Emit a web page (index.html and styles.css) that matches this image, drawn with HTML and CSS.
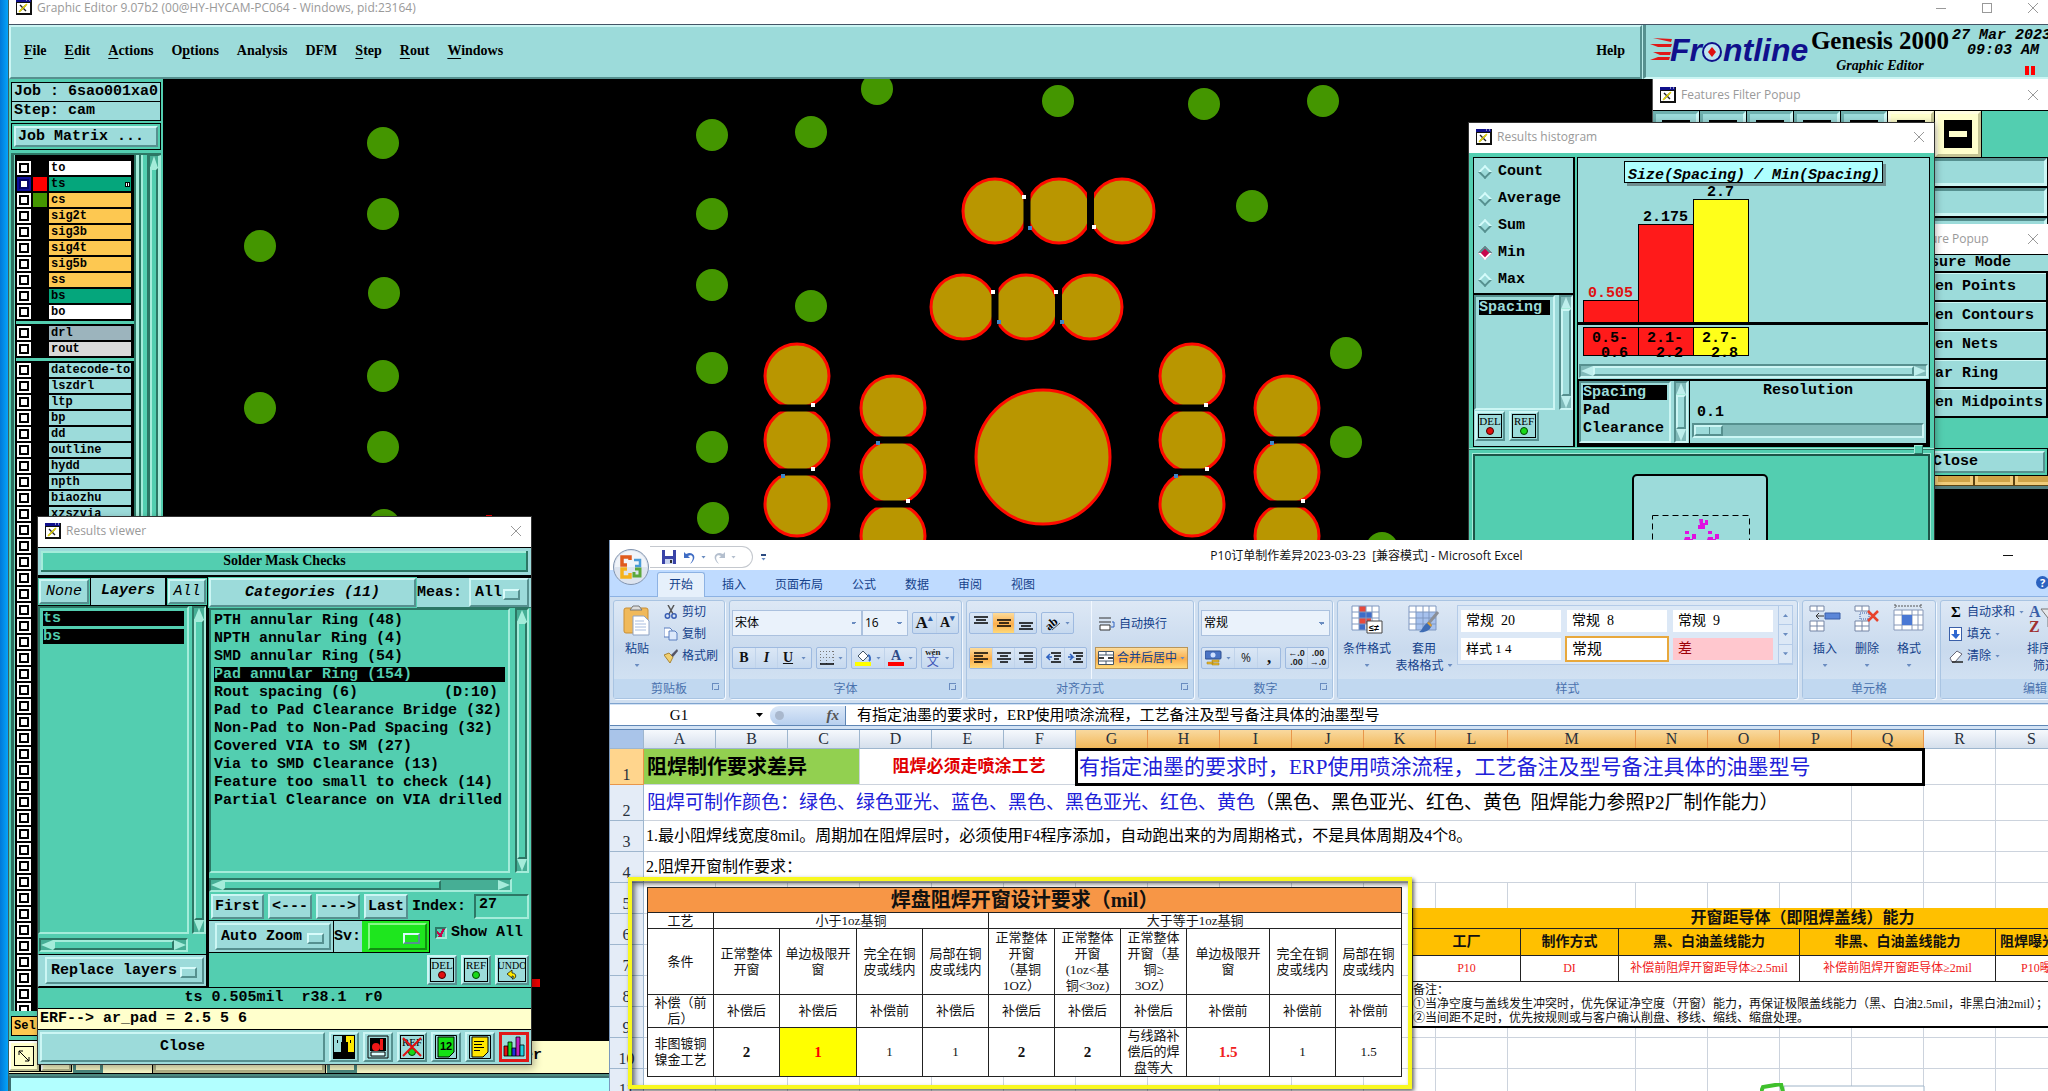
FILE: index.html
```html
<!DOCTYPE html>
<html lang="zh-CN">
<head>
<meta charset="utf-8">
<title>Graphic Editor</title>
<link rel="stylesheet" href="styles.css">
</head>
<body>
<svg class="defs" width="0" height="0" aria-hidden="true">
  <symbol id="appicon" viewBox="0 0 16 16"><rect x="0" y="0" width="16" height="16" fill="#111"/><rect x="1" y="4" width="13" height="10" fill="#fff"/><rect x="0" y="0" width="15" height="3" fill="#10108c"/><path d="M10 1h1M13 1h1" stroke="#fff"/><path d="M4 12l6-6M4 6l6 6" stroke="#222" stroke-width="1.4"/><path d="M3 13l8-8" stroke="#e8d800" stroke-width="1.4"/></symbol>
  <symbol id="close" viewBox="0 0 12 12"><path d="M1 1l10 10M11 1L1 11" stroke="currentColor" fill="none"/></symbol>
  <symbol id="del" viewBox="0 0 24 24"><rect x=".5" y=".5" width="23" height="23" fill="none" stroke="#000"/><text x="12" y="11" text-anchor="middle" font-family="Liberation Serif" font-weight="normal" font-size="11">DEL</text><circle cx="12" cy="17" r="3.5" fill="#e01010" stroke="#400"/></symbol>
  <symbol id="ref" viewBox="0 0 24 24"><rect x=".5" y=".5" width="23" height="23" fill="none" stroke="#000"/><text x="12" y="11" text-anchor="middle" font-family="Liberation Serif" font-weight="normal" font-size="11">REF</text><circle cx="12" cy="17" r="3.5" fill="#18d818" stroke="#040"/></symbol>
</svg>

<main class="desktop">
<!-- Graphic editor -->
<section class="win editor">
  <header class="titlebar"><svg width="16" height="16"><use href="#appicon"/></svg><span>Graphic Editor 9.07b2 (00@HY-HYCAM-PC064 - Windows, pid:23164)</span>
    <div class="caps"><button aria-label="Minimize"><svg width="12" height="12"><path d="M1 6.5h10" stroke="currentColor"/></svg></button><button aria-label="Maximize"><svg width="12" height="12"><rect x="1.500" y="1.500" width="9" height="9" fill="none" stroke="currentColor"/></svg></button><button aria-label="Close"><svg width="12" height="12"><use href="#close"/></svg></button></div>
  </header>
  <div class="menurow">
    <nav class="menubar">
      <button><u>F</u>ile</button><button><u>E</u>dit</button><button><u>A</u>ctions</button><button>O<u>p</u>tions</button><button>Analysis</button><button>DFM</button><button><u>S</u>tep</button><button><u>R</u>out</button><button><u>W</u>indows</button><button class="help">Help</button>
    </nav>
    <div class="brand">
      <svg width="162" height="32" viewBox="0 0 162 32" aria-label="Frontline"><path d="M3 4l19 1-1 3zM0 10h22l-1 3H8zM3 18h18l-1 3H10zM0 26h19l1-3H8z" fill="#e01818"/><text x="20" y="27" class="logo">Fr</text><text x="73" y="27" class="logo">ntline</text><circle cx="62" cy="18" r="9" fill="#bfe6f0" stroke="#10108c" stroke-width="2"/><path d="M62 13l4 5-4 5-4-5z" fill="#e01010"/></svg>
      <div class="product"><strong>Genesis 2000</strong><em>Graphic Editor</em></div>
      <div class="clock"><span>27 Mar 2023</span><span>09:03 AM</span><i class="pause"></i></div>
    </div>
  </div>
  <div class="work">
    <aside class="side">
      <p class="jobline">Job : 6sao001xa0</p>
      <p class="jobline step">Step: cam</p>
      <div class="jm"><button class="btn">Job Matrix ...</button></div>
      <div class="layerbox">
        <ul class="layers">
          <li><input type="checkbox" aria-label="to"><i></i><b class="w">to</b></li>
          <li><input type="checkbox" class="on" aria-label="ts"><i class="red"></i><b class="g">ts<small></small></b></li>
          <li><input type="checkbox" aria-label="cs"><i class="grn"></i><b class="o">cs</b></li>
          <li><input type="checkbox" aria-label="sig2t"><i></i><b class="o">sig2t</b></li>
          <li><input type="checkbox" aria-label="sig3b"><i></i><b class="o">sig3b</b></li>
          <li><input type="checkbox" aria-label="sig4t"><i></i><b class="o">sig4t</b></li>
          <li><input type="checkbox" aria-label="sig5b"><i></i><b class="o">sig5b</b></li>
          <li><input type="checkbox" aria-label="ss"><i></i><b class="o">ss</b></li>
          <li><input type="checkbox" aria-label="bs"><i></i><b class="g">bs</b></li>
          <li><input type="checkbox" aria-label="bo"><i></i><b class="w">bo</b></li>
          <li class="gap"><input type="checkbox" aria-label="drl"><i></i><b class="s">drl</b></li>
          <li><input type="checkbox" aria-label="rout"><i></i><b class="l">rout</b></li>
          <li class="gap"><input type="checkbox" aria-label="datecode-to"><i></i><b>datecode-to</b></li>
          <li><input type="checkbox" aria-label="lszdrl"><i></i><b>lszdrl</b></li>
          <li><input type="checkbox" aria-label="ltp"><i></i><b>ltp</b></li>
          <li><input type="checkbox" aria-label="bp"><i></i><b>bp</b></li>
          <li><input type="checkbox" aria-label="dd"><i></i><b>dd</b></li>
          <li><input type="checkbox" aria-label="outline"><i></i><b>outline</b></li>
          <li><input type="checkbox" aria-label="hydd"><i></i><b>hydd</b></li>
          <li><input type="checkbox" aria-label="npth"><i></i><b>npth</b></li>
          <li><input type="checkbox" aria-label="biaozhu"><i></i><b>biaozhu</b></li>
          <li><input type="checkbox" aria-label="xzszvia"><i></i><b>xzszvia</b></li>
          <li><input type="checkbox" aria-label="layer 23"></li><li><input type="checkbox" aria-label="layer 24"></li><li><input type="checkbox" aria-label="layer 25"></li><li><input type="checkbox" aria-label="layer 26"></li>
          <li><input type="checkbox" aria-label="layer 27"></li><li><input type="checkbox" aria-label="layer 28"></li><li><input type="checkbox" aria-label="layer 29"></li><li><input type="checkbox" aria-label="layer 30"></li>
          <li><input type="checkbox" aria-label="layer 31"></li><li><input type="checkbox" aria-label="layer 32"></li><li><input type="checkbox" aria-label="layer 33"></li><li><input type="checkbox" aria-label="layer 34"></li>
          <li><input type="checkbox" aria-label="layer 35"></li><li><input type="checkbox" aria-label="layer 36"></li><li><input type="checkbox" aria-label="layer 37"></li><li><input type="checkbox" aria-label="layer 38"></li>
          <li><input type="checkbox" aria-label="layer 39"></li><li><input type="checkbox" aria-label="layer 40"></li><li><input type="checkbox" aria-label="layer 41"></li><li><input type="checkbox" aria-label="layer 42"></li>
          <li><input type="checkbox" aria-label="layer 43"></li><li><input type="checkbox" aria-label="layer 44"></li><li><input type="checkbox" aria-label="layer 45"></li><li><input type="checkbox" aria-label="layer 46"></li>
          <li><input type="checkbox" aria-label="layer 47"></li><li><input type="checkbox" aria-label="layer 48"></li><li><input type="checkbox" aria-label="layer 49"></li><li><input type="checkbox" aria-label="layer 50"></li>
          <li><input type="checkbox" aria-label="layer 51"></li><li><input type="checkbox" aria-label="layer 52"></li><li><input type="checkbox" aria-label="layer 53"></li><li><input type="checkbox" aria-label="layer 54"></li>
        </ul>
        <div class="sb v"><i class="up"></i><i class="thumb"></i></div>
      </div>
      <div class="selrow"><button>Sel</button></div>
    </aside>
    <svg class="canvas" width="100%" height="100%" role="img" aria-label="PCB layer view"><g transform="translate(-163 -79)">
      <g fill="#449600"><circle cx="383" cy="143" r="16"/><circle cx="383" cy="214" r="16"/><circle cx="260" cy="246" r="16"/><circle cx="384" cy="293" r="16"/><circle cx="383" cy="376" r="16"/><circle cx="260" cy="408" r="16"/><circle cx="383" cy="447" r="16"/><circle cx="384" cy="525" r="16"/>
      <circle cx="712" cy="135" r="16"/><circle cx="811" cy="132" r="16"/><circle cx="877" cy="89" r="16"/><circle cx="1058" cy="101" r="16"/><circle cx="1204" cy="104" r="16"/><circle cx="1323" cy="101" r="16"/><circle cx="1252" cy="206" r="16"/><circle cx="712" cy="214" r="16"/><circle cx="811" cy="306" r="16"/><circle cx="712" cy="285" r="16"/><circle cx="712" cy="368" r="16"/><circle cx="712" cy="447" r="16"/><circle cx="713" cy="518" r="16"/><circle cx="1346" cy="353" r="16"/><circle cx="1346" cy="442" r="16"/><circle cx="1382" cy="548" r="16"/></g>
      <g fill="#b99600" stroke="#ff0a00" stroke-width="3"><circle cx="995" cy="211" r="32"/><circle cx="1059" cy="211" r="32"/><circle cx="1122" cy="211" r="32"/><circle cx="963" cy="307" r="32"/><circle cx="1026" cy="307" r="32"/><circle cx="1090" cy="307" r="32"/>
      <circle cx="797" cy="376" r="32"/><circle cx="797" cy="440" r="32"/><circle cx="797" cy="504" r="32"/><circle cx="893" cy="408" r="32"/><circle cx="893" cy="472" r="32"/><circle cx="893" cy="536" r="32"/><circle cx="1192" cy="376" r="32"/><circle cx="1192" cy="440" r="32"/><circle cx="1192" cy="504" r="32"/><circle cx="1287" cy="408" r="32"/><circle cx="1287" cy="472" r="32"/><circle cx="1287" cy="536" r="32"/><circle cx="1043" cy="457" r="67"/></g>
      <path d="M1027 190v42M1090.500 190v42M995 286v42M1058.500 286v42M776 408h42M776 472h42M872 440h42M872 504h42M1170 408h42M1170 472h42M1266 440h42M1266 504h42" stroke="#000" stroke-width="7"/>
      <path d="M1022 195h4v4h-4zM1092 225h4v4h-4zM991 290h4v4h-4zM1054 290h4v4h-4zM811 403h4v4h-4zM811 467h4v4h-4zM906 499h4v4h-4zM1204 403h4v4h-4zM1205 467h4v4h-4zM1301 499h4v4h-4z" fill="#fff"/>
      <path d="M1028 226h4v4h-4zM997 320h4v4h-4zM1060 320h4v4h-4zM781 474h4v4h-4zM876 441h4v4h-4zM1174 474h4v4h-4zM1270 441h4v4h-4z" fill="#3f86c8"/>
      <path d="M532 979h8v8h-8zM486 515h6v3h-6z" fill="#f00000"/>
    </g></svg>
  </div>
  <div class="toolstrip"><button aria-label="Zoom"><svg width="20" height="20"><rect x=".5" y=".5" width="19" height="19" fill="none" stroke="#000"/><path d="M5 5l10 10M5 9V5h4M15 11v4h-4" fill="none" stroke="#000"/></svg></button><button aria-label="Tool"></button><i class="tealbit"></i><i class="slot"></i><i class="tealbit"></i><span class="er">Filter</span></div>
  <div class="cmdline"></div>
</section>

<div class="goldstrip"><i></i><i></i><i></i></div>

<!-- Features filter -->
<section class="win feat">
  <header class="titlebar"><svg width="16" height="16"><use href="#appicon"/></svg><span>Features Filter Popup</span><button class="x" aria-label="Close"><svg width="12" height="12"><use href="#close"/></svg></button></header>
  <div class="featbtns"><button aria-label="Line"><i></i></button><button aria-label="Pad"><i></i></button><button aria-label="Surface"><i></i></button><button aria-label="Arc"><i></i></button><button aria-label="Text"><i></i></button><button class="cream" aria-label="Positive"><i></i></button><button class="cream" aria-label="Negative"><i></i></button></div>
  <div class="featrow"></div><div class="featrow"></div><div class="featrow"></div>
</section>

<!-- Measure -->
<section class="win meas">
  <header class="titlebar"><span>Measure Popup</span><button class="x" aria-label="Close"><svg width="12" height="12"><use href="#close"/></svg></button></header>
  <h3>Measure Mode</h3>
  <button>Between Points</button><button>Between Contours</button><button>Between Nets</button><button>Annular Ring</button><button>Between Midpoints</button>
  <div class="measfoot"><button class="btn">Close</button></div>
</section>

<!-- Histogram -->
<section class="win hist">
  <header class="titlebar"><svg width="16" height="16"><use href="#appicon"/></svg><span>Results histogram</span><button class="x" aria-label="Close"><svg width="12" height="12"><use href="#close"/></svg></button></header>
  <div class="histtop">
    <div class="hleft">
      <div class="radios"><label><input type="radio" name="m">Count</label><label><input type="radio" name="m">Average</label><label><input type="radio" name="m">Sum</label><label><input type="radio" name="m" checked>Min</label><label><input type="radio" name="m">Max</label></div>
      <div class="hlistrow"><ul class="mlist"><li class="sel">Spacing</li></ul><div class="sb v"><i class="up"></i><i class="thumb"></i><i class="down"></i></div></div>
      <div class="icons"><button class="btn ic" aria-label="DEL"><svg width="24" height="24"><use href="#del"/></svg></button><button class="btn ic" aria-label="REF"><svg width="24" height="24"><use href="#ref"/></svg></button></div>
    </div>
    <div class="hright">
      <svg class="plot" width="350" height="205" role="img" aria-label="Size by minimum spacing"><g transform="translate(-1578 -158)">
        <rect x="1627" y="164" width="259" height="22" fill="#6f8f90"/><rect x="1624.500" y="161.500" width="258" height="21" fill="#aeffff" stroke="#000"/><text x="1628" y="179" class="ttl">Size(Spacing) / Min(Spacing)</text>
        <g stroke="#000"><rect x="1583.500" y="300.500" width="55" height="22" fill="#ff1a1a"/><rect x="1638.500" y="224.500" width="55" height="98" fill="#ff1a1a"/><rect x="1693.500" y="199.500" width="55" height="123" fill="#ffff1a"/><rect x="1583.500" y="327.500" width="55" height="28" fill="#ff1a1a"/><rect x="1638.500" y="327.500" width="55" height="28" fill="#ff1a1a"/><rect x="1693.500" y="327.500" width="55" height="28" fill="#ffff1a"/></g>
        <rect x="1578" y="322" width="350" height="3"/>
        <text x="1588" y="297" fill="#e01010">0.505</text><text x="1643" y="221">2.175</text><text x="1707" y="196">2.7</text>
        <text x="1592" y="342">0.5-</text><text x="1601" y="357">0.6</text><text x="1647" y="342">2.1-</text><text x="1656" y="357">2.2</text><text x="1702" y="342">2.7-</text><text x="1711" y="357">2.8</text>
      </g></svg>
      <div class="sb h"><i class="left"></i><i class="thumb"></i><i class="right"></i></div>
      <div class="hres"><ul class="mlist"><li class="sel">Spacing</li><li>Pad</li><li>Clearance</li></ul><div class="sb v"><i class="up"></i><i class="thumb"></i><i class="down"></i></div>
        <div class="res"><label for="resn">Resolution</label><output for="resn">0.1</output><input id="resn" type="range" min="0" max="100" value="0"></div></div>
    </div>
  </div>
  <div class="sash"><i></i></div>
  <div class="hbottom"><svg width="140" height="90"><rect x="3" y="2" width="134" height="100" rx="4" fill="#9cdbda" stroke="#000" stroke-width="2"/><rect x="22.500" y="42.500" width="97" height="60" fill="none" stroke="#000" stroke-dasharray="6 4"/><path d="M69 46h4v4h2v-3h3v5h-3v4h-7v-4h2zM55 58h4v3h-4zM55 64h5v2h2v-5h4v5h-3v3h-4v-2h-5zM78 58h4v3h-4zM78 64h5v2h2v-5h4v5h-3v3h-4v-2h-5z" fill="#e010e0"/></svg></div>
</section>

<!-- Results viewer -->
<section class="win rv">
  <header class="titlebar"><svg width="16" height="16"><use href="#appicon"/></svg><span>Results viewer</span><button class="x" aria-label="Close"><svg width="12" height="12"><use href="#close"/></svg></button></header>
  <h2>Solder Mask Checks</h2>
  <div class="rvmain">
    <div class="rvl">
      <div class="lh"><button class="btn it">None</button><strong>Layers</strong><button class="btn it">All</button></div>
      <div class="lw"><ul class="mlist"><li class="sel">ts</li><li class="sel">bs</li></ul><div class="sb v"><i class="up"></i><i class="thumb"></i><i class="down"></i></div></div>
      <div class="sb h"><i class="left"></i><i class="thumb"></i><i class="right"></i></div>
      <label class="opt rep"><select aria-label="Layer action"><option>Replace layers</option></select></label>
    </div>
    <div class="rvr">
      <div class="ch"><button class="btn it b">Categories (11)</button><label for="ms">Meas:</label><span class="opt"><select id="ms"><option>All</option></select></span></div>
      <div class="lw"><ul class="mlist"><li>PTH annular Ring (48)</li><li>NPTH annular Ring (4)</li><li>SMD annular Ring (54)</li><li class="sel">Pad annular Ring (154)</li><li><span>Rout spacing (6)</span><span class="d">(D:10)</span></li><li>Pad to Pad Clearance Bridge (32)</li><li>Non-Pad to Non-Pad Spacing (32)</li><li>Covered VIA to SM (27)</li><li>Via to SMD Clearance (13)</li><li>Feature too small to check (14)</li><li>Partial Clearance on VIA drilled</li></ul><div class="sb v"><i class="up"></i><i class="thumb"></i><i class="down"></i></div></div>
      <div class="sb h part"><i class="left"></i><i class="thumb"></i><i class="right"></i></div>
      <div class="nav"><button class="btn">First</button><button class="btn">&lt;---</button><button class="btn">---&gt;</button><button class="btn">Last</button><label for="idx">Index:</label><input id="idx" value="27"></div>
      <div class="zoomrow"><span class="opt az"><select aria-label="Zoom mode"><option>Auto Zoom</option></select></span><label for="sv">Sv:</label><span class="opt sv"><select id="sv"><option> </option></select></span><label class="show"><input type="checkbox" checked>Show All</label></div>
      <div class="icons end"><button class="btn ic" aria-label="DEL"><svg width="24" height="24"><use href="#del"/></svg></button><button class="btn ic" aria-label="REF"><svg width="24" height="24"><use href="#ref"/></svg></button><button class="btn ic" aria-label="UNDO"><svg width="28" height="24"><rect x=".5" y=".5" width="27" height="23" fill="none" stroke="#000"/><text x="14" y="11" text-anchor="middle" font-family="Liberation Serif" font-weight="normal" font-size="10">UNDO</text><path d="M9 16l5-4v3c5 0 5 6 0 6 2-2 2-3 0-3v2z" fill="#ffe800" stroke="#000" stroke-width=".7"/></svg></button></div>
    </div>
  </div>
  <p class="stat">ts 0.505mil&nbsp; r38.1&nbsp; r0</p>
  <p class="erf">ERF--&gt; ar_pad = 2.5 5 6</p>
  <div class="rvfoot"><button class="btn closeb">Close</button>
    <button class="btn ic" aria-label="Contrast"><svg width="22" height="24"><path d="M0 0h22v24H0z"/><path d="M1 1h8v6h-1v10H1z" fill="#9cdbda"/><path d="M13 1h8v16h-6V7h-2z" fill="#ffe800"/><path d="M4 5h1v3H4z"/><path d="M17 5h1v3h-1z"/></svg></button>
    <button class="btn ic" aria-label="Marker"><svg width="22" height="24"><path d="M1 1h20v22H1z" fill="none" stroke="#000"/><path d="M3 3h16v13H3z"/><circle cx="9" cy="12" r="4" fill="#f01818"/><path d="M13 4h3v11h-3z" fill="#f01818"/><path d="M4 17h14v4H4z" fill="#dff" stroke="#000"/></svg></button>
    <button class="btn ic" aria-label="No REF"><svg width="24" height="24"><use href="#ref"/><path d="M3 3l18 18M21 3L3 21" stroke="#e01010" stroke-width="2"/></svg></button>
    <button class="btn ic" aria-label="Numbers"><svg width="22" height="24"><path d="M.5.500h21v23H.5z" fill="none" stroke="#000"/><path d="M3 2h16v15l-5 5H3z" fill="#14e014" stroke="#000"/><text x="11" y="15" text-anchor="middle" font-family="Liberation Sans" font-weight="bold" font-size="11">12</text></svg></button>
    <button class="btn ic" aria-label="Notes"><svg width="22" height="24"><path d="M.5.500h21v23H.5z" fill="none" stroke="#000"/><path d="M3 2h16v15l-5 5H3z" fill="#ffe800" stroke="#000"/><path d="M5 6.500h10M5 9.500h8M5 12.500h10M5 15.500h6" stroke="#000"/></svg></button>
    <button class="btn ic hot" aria-label="Histogram"><svg width="22" height="22"><g stroke="#000" stroke-width=".8"><path d="M1 10h4v10H1z" fill="#e01010"/><path d="M5 6h4v14H5z" fill="#18d818"/><path d="M9 12h4v8H9z" fill="#2030e0"/><path d="M13 1h4v19h-4z" fill="#c020c0"/><path d="M17 9h4v11h-4z" fill="#20d0e0"/></g></svg></button>
  </div>
</section>

<!-- Excel -->
<section class="win xl">
  <header class="xltitle">
    <svg class="orb" width="38" height="38"><circle cx="19" cy="19" r="17.500" fill="#dde4ef" stroke="#8294ae"/><path d="M3 19a16 16 0 0 1 32 0z" fill="#fff" opacity=".6"/><g fill="none" stroke-width="3.500"><path d="M18 12V9h-8v8h5" stroke="#e05a1c"/><path d="M22 12h6v6h-5" stroke="#4a9bd8" stroke-width="2.500"/><path d="M15 21h-5v8h8v-4" stroke="#f5b21c"/><path d="M23 21h5v7h-6v-4" stroke="#5da83c" stroke-width="3"/></g></svg>
    <div class="qat"><button aria-label="Save"><svg width="14" height="14"><path d="M0 0h14v14H0z" fill="#3a44a8"/><path d="M3 0h8v6H3z" fill="#fff"/><path d="M3 9h8v5H3z" fill="#c8d4f0"/><path d="M8 10h2v3H8z" fill="#333"/></svg></button><button aria-label="Undo"><svg width="13" height="13"><path d="M1 1v6h6L5 5c4-2 6 1 4 5l-2 3c6-4 6-11-1-11L3 3z" fill="#3f6cc4"/></svg></button><i class="caret"></i><button aria-label="Redo"><svg width="13" height="13"><path d="M12 1v6H6l2-2C4 3 2 6 4 10l2 3C0 9 0 2 7 2l3 1z" fill="#b4bfce"/></svg></button><i class="caret dim"></i></div>
    <button class="more" aria-label="Customize"><i class="caret"></i></button>
    <h1>P10订单制作差异2023-03-23&nbsp; [兼容模式] - Microsoft Excel</h1>
    <div class="caps dark"><button aria-label="Minimize"><svg width="12" height="12"><path d="M1 6.500h10" stroke="currentColor"/></svg></button><button aria-label="Maximize"><svg width="12" height="12"><rect x="1.500" y="1.500" width="9" height="9" fill="none" stroke="currentColor"/></svg></button><button aria-label="Close"><svg width="12" height="12"><use href="#close"/></svg></button></div>
  </header>
  <nav class="tabs"><button class="on">开始</button><button>插入</button><button>页面布局</button><button>公式</button><button>数据</button><button>审阅</button><button>视图</button><button class="q" aria-label="Help">?</button></nav>
  <div class="ribbon">
    <section class="grp clip"><div class="gb">
      <button class="big"><svg width="28" height="32"><rect x="1" y="4" width="24" height="25" rx="2" fill="#f0b95a" stroke="#c98f34"/><path d="M7 6l3-4h6l3 4z" fill="#ddd" stroke="#777"/><path d="M10 12h11l5 5v14H10z" fill="#fff" stroke="#8fa3c4"/><path d="M12 17h9M12 20h11M12 23h11M12 26h11" stroke="#a8bde0"/></svg><span>粘贴</span><i class="caret"></i></button>
      <div class="stack"><button><svg width="14" height="14"><path d="M4 0l5 9M10 0L5 9" stroke="#555" stroke-width="1.500"/><circle cx="3.500" cy="11" r="2.200" fill="none" stroke="#3a5fb4" stroke-width="1.500"/><circle cx="10" cy="11" r="2.200" fill="none" stroke="#3a5fb4" stroke-width="1.500"/></svg>剪切</button><button><svg width="14" height="14"><path d="M0 1h6l2 2v7H0z" fill="#fff" stroke="#5a7fc0"/><path d="M5 4h6l2 2v7H5z" fill="#dce8fb" stroke="#5a7fc0"/></svg>复制</button><button><svg width="14" height="14"><path d="M0 6l5-2 4 4-3 6z" fill="#f0cf70" stroke="#a88436"/><path d="M7 6l6-6 1 2-5 6z" fill="#556"/></svg>格式刷</button></div>
    </div><footer>剪贴板<i class="dl"></i></footer></section>

    <section class="grp font"><div class="gb col">
      <div class="r"><select class="wf" aria-label="字体"><option>宋体</option></select><select class="ws" aria-label="字号"><option>16</option></select><div class="bx"><button><span class="se f18">A<sup>▴</sup></span></button><button><span class="se">A<sup>▾</sup></span></button></div></div>
      <div class="r"><div class="bx"><button><b class="se">B</b></button><button><i class="se">I</i></button><button><u class="se">U</u><i class="caret"></i></button></div><div class="bx"><button aria-label="边框"><svg width="14" height="14"><path d="M.5 0v13M6.500 0v13M13.500 0v13M0 .5h14M0 6.500h14" stroke="#777" stroke-dasharray="1 2"/><path d="M0 13h14" stroke="#000" stroke-width="1.500"/></svg><i class="caret"></i></button></div><div class="bx"><button aria-label="填充颜色"><svg width="17" height="16"><path d="M3 6l5-5 5 5-5 5z" fill="#fff" stroke="#456"/><path d="M13 5c2 1 3 4 1 6" fill="none" stroke="#3a6cc0" stroke-width="2"/><path d="M0 12h16v4H0z" fill="#ff0"/></svg><i class="caret"></i></button><button class="ac"><span class="se">A</span><i class="caret"></i></button></div><div class="bx"><button class="wen"><span><small>wén</small>文</span><i class="caret"></i></button></div></div>
    </div><footer>字体<i class="dl"></i></footer></section>

    <section class="grp align"><div class="gb">
      <div class="cols"><div class="r"><div class="bx"><button aria-label="顶端对齐"><svg width="14" height="14"><path d="M0 1h14M2 4h10M0 7h14" stroke="#000" stroke-width="1.500"/></svg></button><button class="hi" aria-label="垂直居中"><svg width="14" height="14"><path d="M0 4h14M2 7h10M0 10h14" stroke="#000" stroke-width="1.500"/></svg></button><button aria-label="底端对齐"><svg width="14" height="14"><path d="M0 7h14M2 10h10M0 13h14" stroke="#000" stroke-width="1.500"/></svg></button></div><div class="bx"><button aria-label="方向"><svg width="16" height="16"><text x="0" y="13" transform="rotate(-40 6 9)" font-family="Liberation Serif" font-weight="bold" font-size="12">ab</text><path d="M7 15l8-7" stroke="#555"/></svg><i class="caret"></i></button></div></div>
      <div class="r"><div class="bx"><button class="hi" aria-label="左对齐"><svg width="14" height="14"><path d="M0 2h14M0 5h9M0 8h14M0 11h9" stroke="#000" stroke-width="1.500"/></svg></button><button aria-label="居中"><svg width="14" height="14"><path d="M0 2h14M3 5h8M0 8h14M3 11h8" stroke="#000" stroke-width="1.500"/></svg></button><button aria-label="右对齐"><svg width="14" height="14"><path d="M0 2h14M5 5h9M0 8h14M5 11h9" stroke="#000" stroke-width="1.500"/></svg></button></div><div class="bx"><button aria-label="减少缩进"><svg width="15" height="14"><path d="M5 2h10M8 5h7M8 8h5M5 11h10" stroke="#000" stroke-width="1.500"/><path d="M6 6H1l3-3M1 6l3 3" stroke="#2f62c0" fill="none" stroke-width="1.500"/></svg></button><button aria-label="增加缩进"><svg width="15" height="14"><path d="M5 2h10M8 5h7M8 8h5M5 11h10" stroke="#000" stroke-width="1.500"/><path d="M0 6h5L2 3M5 6L2 9" stroke="#2f62c0" fill="none" stroke-width="1.500"/></svg></button></div></div></div>
      <div class="cols wrapc"><button class="flat"><svg width="16" height="14"><path d="M0 1h12M0 5h12" stroke="#333"/><path d="M1 8h10v5H1z" fill="#fff" stroke="#333"/><path d="M13 5h2v5h-3" stroke="#2f62c0" fill="none"/></svg>自动换行</button><button class="flat merged"><svg width="16" height="14"><path d="M.5.500h15v13H.5zM.5 4h15M.5 10h15M8 0v4M8 10v4" fill="#fff" stroke="#456"/><path d="M1 7h5M10 7h5" stroke="#000" stroke-width="1.500"/></svg>合并后居中<i class="caret"></i></button></div>
    </div><footer>对齐方式<i class="dl"></i></footer></section>

    <section class="grp num"><div class="gb col">
      <div class="r"><select class="wn" aria-label="数字格式"><option>常规</option></select></div>
      <div class="r"><div class="bx"><button aria-label="会计格式"><svg width="17" height="16"><rect x="0" y="1" width="16" height="8" rx="1" fill="#4a74c4" stroke="#2c4e90"/><circle cx="8" cy="5" r="2.500" fill="#cfe0ff"/><path d="M2 12h6v2H2zM7 10h7v2H7zM7 13h7v2H7z" fill="#e8b830" stroke="#a07c10" stroke-width=".5"/></svg><i class="caret"></i></button><button>%</button><button><b class="se f18">,</b></button></div><div class="bx tiny"><button>←.0<br>.00</button><button>.00<br>→.0</button></div></div>
    </div><footer>数字<i class="dl"></i></footer></section>

    <section class="grp style"><div class="gb">
      <button class="big cf"><svg width="32" height="30"><path d="M1 2h27v24H1z" fill="#fff"/><path d="M8 2h7v6H8zM8 14h12v6H8z" fill="#e8493a"/><path d="M8 8h13v6H8zM8 20h6v6H8z" fill="#3e6cc8"/><path d="M1 2h27v24H1zM1 8h27M1 14h27M1 20h27M8 2v24M15 2v24M21 2v24" fill="none" stroke="#7f97c0"/><path d="M16 17h15v12H16z" fill="#fff" stroke="#444"/><text x="18" y="27" font-size="9" font-weight="bold" font-family="Liberation Sans">≤≠</text></svg><span>条件格式</span><i class="caret"></i></button>
      <button class="big tf"><svg width="32" height="30"><path d="M1 2h27v24H1z" fill="#fff"/><path d="M8 8h20v18H8z" fill="#a7c2ee"/><path d="M1 2h27v24H1zM1 8h27M1 14h27M1 20h27M8 2v24M15 2v24M21 2v24" fill="none" stroke="#7f97c0"/><path d="M30 8L20 20" stroke="#8b8f98" stroke-width="3"/><path d="M21 18l3 3c-2 6-8 8-13 7 4-2 4-8 10-10z" fill="#3e6cb4"/><path d="M21 18l3 3-1 2-4-4z" fill="#e0a030"/></svg><span>套用<br>表格格式<i class="caret"></i></span></button>
      <div class="gal"><div class="cellsx"><button>常规&nbsp; 20</button><button>常规&nbsp; 8</button><button>常规&nbsp; 9</button><button class="yh">样式 1 4</button><button class="cur">常规</button><button class="bad">差</button></div><div class="gs"><button aria-label="上"><i class="caret upc"></i></button><button aria-label="下"><i class="caret"></i></button><button aria-label="更多"><i class="caret"></i></button></div></div>
    </div><footer>样式</footer></section>

    <section class="grp cel"><div class="gb">
      <button class="big"><svg width="32" height="30"><path d="M1 2h14v5H1zM8 2v5M1 17h14v10H1zM8 17v10M1 22h14" fill="#fff" stroke="#7585a5"/><path d="M16 9h15v6H16z" fill="#5b86d8" stroke="#3a5fa8"/><path d="M15 12H7l3-3M7 12l3 3" fill="none" stroke="#333"/></svg><span>插入</span><i class="caret"></i></button>
      <button class="big"><svg width="32" height="30"><path d="M4 2h14v5H4zM11 2v5M4 17h14v10H4zM11 17v10M4 22h14" fill="#fff" stroke="#7585a5"/><path d="M9 9h9v6H9z" fill="none" stroke="#3a5fa8" stroke-dasharray="1 1"/><path d="M17 7l10 10M27 7L17 17" stroke="#e8432c" stroke-width="2.500"/></svg><span>删除</span><i class="caret"></i></button>
      <button class="big"><svg width="32" height="30"><path d="M2 2h26M2 0v4M28 0v4" stroke="#555" stroke-dasharray="2 1"/><path d="M1 6h29v20H1zM1 11h29M1 21h29M9 6v20M19 6v20M25 6v20" fill="#fff" stroke="#8798b8"/><path d="M9 11h10v10H9z" fill="#4a78d4"/></svg><span>格式</span><i class="caret"></i></button>
    </div><footer>单元格</footer></section>

    <section class="grp edit"><div class="gb">
      <div class="stack"><button><b class="sig">Σ</b>自动求和<i class="caret"></i></button><button><svg width="14" height="14"><rect x=".5" y=".5" width="12" height="13" fill="#fff" stroke="#3a5fa8"/><path d="M5 3h3v4h3l-4 5-5-5h3z" fill="#2f68d0"/></svg>填充<i class="caret"></i></button><button><svg width="14" height="14"><path d="M1 9l7-7 5 3-7 8H3z" fill="#fff" stroke="#667"/><path d="M3 13h11" stroke="#222" stroke-width="1.500"/></svg>清除<i class="caret"></i></button></div>
      <button class="big"><svg width="32" height="30"><text x="0" y="13" font-family="Liberation Serif" font-weight="bold" font-size="16" fill="#3a5fa8">A</text><text x="0" y="28" font-family="Liberation Serif" font-weight="bold" font-size="16" fill="#a03030">Z</text><path d="M12 5h18l-7 9v12l-4-3v-9z" fill="#e6e6ea" stroke="#777"/></svg><span>排序和<br>筛选</span></button>
    </div><footer>编辑</footer></section>
  </div>
  <div class="fbar"><input class="nb" value="G1" aria-label="名称框"><i class="caret blk"></i><div class="fx"><i></i><em>fx</em></div><input class="fi" aria-label="编辑栏" value="有指定油墨的要求时，ERP使用喷涂流程，工艺备注及型号备注具体的油墨型号"></div>
  <div class="sheet">
    <table class="grid">
      <colgroup><col class="rh"><col span="12" class="c"><col class="m"><col span="6" class="c"></colgroup>
      <thead><tr><th class="corner"></th><th>A</th><th>B</th><th>C</th><th>D</th><th>E</th><th>F</th><th class="s">G</th><th class="s">H</th><th class="s">I</th><th class="s">J</th><th class="s">K</th><th class="s">L</th><th class="s">M</th><th class="s">N</th><th class="s">O</th><th class="s">P</th><th class="s">Q</th><th>R</th><th>S</th></tr></thead>
      <tbody>
        <tr class="h36"><th class="s">1</th><td colspan="3" class="t1">阻焊制作要求差异</td><td colspan="3" class="t2">阻焊必须走喷涂工艺</td><td colspan="11" class="t3">有指定油墨的要求时，ERP使用喷涂流程，工艺备注及型号备注具体的油墨型号</td><td></td><td></td></tr>
        <tr class="h36"><th>2</th><td colspan="16" class="t4"><span>阻焊可制作颜色：绿色、绿色亚光、蓝色、黑色、黑色亚光、红色、黄色</span>（黑色、黑色亚光、红色、黄色&nbsp; 阻焊能力参照P2厂制作能力）</td><td></td><td></td><td></td></tr>
        <tr><th>3</th><td colspan="16" class="t5">1.最小阻焊线宽度8mil。周期加在阻焊层时，必须使用F4程序添加，自动跑出来的为周期格式，不是具体周期及4个8。</td><td></td><td></td><td></td></tr>
        <tr><th>4</th><td colspan="16" class="t5">2.阻焊开窗制作要求：</td><td></td><td></td><td></td></tr>
        <tr><th>5</th><td></td><td></td><td></td><td></td><td></td><td></td><td></td><td></td><td></td><td></td><td></td><td></td><td></td><td></td><td></td><td></td><td></td><td></td><td></td></tr>
        <tr><th>6</th><td></td><td></td><td></td><td></td><td></td><td></td><td></td><td></td><td></td><td></td><td></td><td></td><td></td><td></td><td></td><td></td><td></td><td></td><td></td></tr>
        <tr><th>7</th><td></td><td></td><td></td><td></td><td></td><td></td><td></td><td></td><td></td><td></td><td></td><td></td><td></td><td></td><td></td><td></td><td></td><td></td><td></td></tr>
        <tr><th>8</th><td></td><td></td><td></td><td></td><td></td><td></td><td></td><td></td><td></td><td></td><td></td><td></td><td></td><td></td><td></td><td></td><td></td><td></td><td></td></tr>
        <tr><th>9</th><td></td><td></td><td></td><td></td><td></td><td></td><td></td><td></td><td></td><td></td><td></td><td></td><td></td><td></td><td></td><td></td><td></td><td></td><td></td></tr>
        <tr><th>10</th><td></td><td></td><td></td><td></td><td></td><td></td><td></td><td></td><td></td><td></td><td></td><td></td><td></td><td></td><td></td><td></td><td></td><td></td><td></td></tr>
        <tr><th>11</th><td></td><td></td><td></td><td></td><td></td><td></td><td></td><td></td><td></td><td></td><td></td><td></td><td></td><td></td><td></td><td></td><td></td><td></td><td></td></tr>
      </tbody>
    </table>
    <table class="capab">
      <colgroup><col class="k1"><col class="k2"><col class="k3"><col class="k4"><col class="k5"></colgroup>
      <tr class="y ttl"><th colspan="5">开窗距导体（即阻焊盖线）能力</th></tr>
      <tr class="y"><th>工厂</th><th>制作方式</th><th>黑、白油盖线能力</th><th>非黑、白油盖线能力</th><th>阻焊曝光方式</th></tr>
      <tr class="rd"><td>P10</td><td>DI</td><td>补偿前阻焊开窗距导体≥2.5mil</td><td>补偿前阻焊开窗距导体≥2mil</td><td>P10曝光机</td></tr>
      <tr class="nt"><td colspan="5">备注：<br>①当净空度与盖线发生冲突时，优先保证净空度（开窗）能力，再保证极限盖线能力（黑、白油2.5mil，非黑白油2mil）；<br>②当间距不足时，优先按规则或与客户确认削盘、移线、缩线、缩盘处理。</td></tr>
    </table>
    <div class="frame">
      <table class="req">
        <colgroup><col class="a"><col class="a"><col class="b"><col class="a"><col class="a"><col class="a"><col class="a"><col class="a"><col class="d"><col class="a"><col class="a"></colgroup>
        <tr class="ot"><th colspan="11">焊盘阻焊开窗设计要求（mil）</th></tr>
        <tr class="r1"><td>工艺</td><td colspan="4">小于1oz基铜</td><td colspan="6">大于等于1oz基铜</td></tr>
        <tr class="r2"><td>条件</td><td>正常整体开窗</td><td>单边极限开<br>窗</td><td>完全在铜皮或线内</td><td>局部在铜皮或线内</td><td>正常整体开窗<br>（基铜1OZ）</td><td>正常整体开窗<br>(1oz&lt;基<br>铜&lt;3oz)</td><td>正常整体开窗（基<br>铜≥<br>3OZ）</td><td>单边极限开<br>窗</td><td>完全在铜皮或线内</td><td>局部在铜皮或线内</td></tr>
        <tr class="r3"><td>补偿（前后）</td><td>补偿后</td><td>补偿后</td><td>补偿前</td><td>补偿后</td><td>补偿后</td><td>补偿后</td><td>补偿后</td><td>补偿前</td><td>补偿前</td><td>补偿前</td></tr>
        <tr class="r4"><td>非图镀铜镍金工艺</td><td><b>2</b></td><td class="hl"><b>1</b></td><td>1</td><td>1</td><td><b>2</b></td><td><b>2</b></td><td>与线路补偿后的焊盘等大</td><td class="rd"><b>1.5</b></td><td>1</td><td>1.5</td></tr>
      </table>
    </div>
    <svg class="mark" width="170" height="9"><path d="M24 9V3h140v6" fill="#fff" stroke="#9fb4c8"/><path d="M1 9l2-5 18-3 2 8" fill="none" stroke="#3fc02c" stroke-width="4"/></svg>
  </div>
</section>
</main>
</body>
</html>
```
FILE: styles.css
```css
* { box-sizing: border-box; }
:root {
  --aqua: #9cdbda; --aqua-l: #ccf6f4; --aqua-d: #56908f;
  --teal: #53ceb0; --teal-l: #a4ecda; --teal-d: #2c7765;
  --mono: "Liberation Mono", "Courier New", monospace;
  --serif: "Liberation Serif", serif;
  --ui: "Open Sans", "Noto Sans CJK SC", sans-serif;
  --song: "Liberation Serif", "Noto Sans CJK SC", serif;
}
body { margin: 0; height: 100vh; overflow: hidden; background: #0494ec; }
button, select, input { font: inherit; color: inherit; margin: 0; padding: 0; border: 0; background: none; border-radius: 0; outline: 0; }
button { white-space: nowrap; }
ul, p, h1, h2, h3 { margin: 0; padding: 0; list-style: none; }
svg { display: block; flex: none; }
select { appearance: none; }
.defs { position: absolute; }
.desktop { position: relative; height: 100vh; overflow: hidden; background: linear-gradient(90deg, #0078d8, #04a4fa 8px); }
.win { position: absolute; font: bold 15px/18px var(--mono); color: #000; overflow: hidden; }

.titlebar { display: flex; align-items: center; gap: 5px; height: 30px; padding-left: 7px; background: #fff; color: #999; font: 13px/18px var(--ui); }
.titlebar span { white-space: nowrap; flex: 1; font: 12px/18px var(--ui); }
.hist .titlebar, .rv .titlebar { padding-bottom: 2px; }
.x { width: 30px; height: 30px; display: grid; place-items: center; }
.caps { display: flex; }
.caps button { width: 46px; height: 24px; display: grid; place-items: center; }
.caps.dark { color: #111; }

.btn { background: var(--aqua); border: 2px solid; border-color: var(--aqua-l) var(--aqua-d) var(--aqua-d) var(--aqua-l); font-weight: bold; }
.it { font-style: italic; font-weight: normal; }
.it.b { font-weight: bold; }

/* scroll bars */
.sb { display: flex; background: #46ae95; border: 2px solid; border-color: var(--teal-d) var(--teal-l) var(--teal-l) var(--teal-d); overflow: hidden; flex: none; }
.sb.v { flex-direction: column; width: 14px; }
.sb.h { height: 14px; }
.sb i { background: var(--teal); flex: none; }
.sb .thumb { flex: 1; border: 2px solid; border-color: var(--teal-l) var(--teal-d) var(--teal-d) var(--teal-l); }
.sb .up, .sb .down { height: 12px; border-bottom: 1px solid var(--teal-l); }
.sb .left, .sb .right { width: 12px; }
.sb .up { background: var(--teal-l); clip-path: polygon(50% 0, 100% 100%, 0 100%); }
.sb .down { background: var(--teal-l); clip-path: polygon(0 0, 100% 0, 50% 100%); }
.sb .left { background: var(--teal-l); clip-path: polygon(100% 0, 100% 100%, 0 50%); }
.sb .right { background: var(--teal-l); clip-path: polygon(0 0, 100% 50%, 0 100%); }
.sb.part .thumb { flex: 0 0 218px; }
.sb.part .right { margin-left: auto; }

/* graphic editor */
.editor { left: 8px; right: -8px; top: 0; bottom: 0; display: flex; flex-direction: column; background: #4d8c82; border-left: 1px solid #3d5f60; }
.editor .titlebar { height: 24px; align-items: flex-start; }
.editor .titlebar > svg { margin-top: -1px; }
.editor .titlebar > span { line-height: 16px; }
.editor .caps button { height: 15px; }
.menurow { display: flex; height: 55px; background: #b9ecea; border-top: 1px solid #456; }
.menubar { flex: 1; display: flex; align-items: center; gap: 18px; padding: 0 0 2px 13px; background: var(--aqua); border: 2px solid; border-color: var(--aqua-l) var(--aqua-d) var(--aqua-d) var(--aqua-l); font: bold 14px/20px var(--serif); }
.menubar u { text-underline-offset: 3px; }
.menubar .help { margin-left: auto; margin-right: 15px; }
.brand { width: 413px; display: flex; background: var(--aqua); border-left: 3px solid var(--aqua-d); border-bottom: 2px solid var(--aqua-l); padding: 2px 8px 0 4px; margin-left: 1px; }
.brand svg { margin-top: 7px; }
.logo { font: italic bold 32px "Liberation Sans", sans-serif; fill: #10108c; }
.product { display: flex; flex-direction: column; align-items: center; width: 136px; }
.product strong { font: bold 25px/28px var(--serif); white-space: nowrap; }
.product em { font: italic bold 14px/22px var(--serif); }
.clock { font: italic bold 15px/15px var(--mono); display: flex; flex-direction: column; align-items: flex-end; margin-left: 4px; padding-top: 1px; white-space: nowrap; }
.clock span:nth-child(2) { margin-right: 12px; }
.pause { width: 10px; height: 9px; margin: 8px 16px 0 0; border: solid #f00; border-width: 0 4px; }
.work { flex: 1; display: flex; min-height: 0; background: #000; }
.canvas { background: #000; flex: 1; min-width: 0; }
.side { width: 154px; flex: none; background: var(--teal); padding: 3px 2px 0; display: flex; flex-direction: column; min-height: 0; }
.jobline { height: 20px; border: 1px solid #000; background: var(--aqua); padding-left: 2px; white-space: nowrap; }
.jobline.step { border-top: 0; height: 19px; }
.jm { margin-top: 2px; border: 1px solid #000; padding: 2px; height: 27px; display: flex; }
.jm .btn { flex: 1; text-align: left; padding-left: 2px; height: 21px; line-height: 17px; }
.layerbox { flex: 1; min-height: 0; margin-top: 3px; display: flex; gap: 4px; border-top: 2px solid var(--teal-d); }
.layers { width: 132px; padding: 6px 12px 0 6px; overflow: hidden; background: linear-gradient(90deg, #2f6f60 3px, #74d8c0 3px 4px, #000 4px 123px, #2c7765 123px 125px, #a4ecda 125px 128px, #2c7765 128px 130px, #a4ecda 130px); }
.layers li { display: flex; gap: 2px; height: 16px; padding-bottom: 2px; }
.layers li.gap { margin-top: 5px; position: relative; }
.layers li.gap::before { content: ""; position: absolute; left: -1px; right: -3px; top: -5px; height: 3px; background: var(--teal); }
.layers input { appearance: none; width: 14px; height: 14px; border: 2px solid #fff; background: #fff; box-shadow: inset 0 0 0 2px #000; flex: none; }
.layers input.on { border-color: #10109c; box-shadow: inset 0 0 0 2px #04046a; }
.layers i { width: 14px; }
.layers .red { background: #f00; }
.layers .grn { background: #449600; }
.layers b { flex: 1; background: var(--aqua); font: bold 12px/14px var(--mono); padding-left: 2px; display: flex; align-items: center; }
.layers b small { width: 5px; height: 5px; margin: 0 1px 0 auto; background: repeating-linear-gradient(90deg, #000 0 1px, #fff 1px 2px); border: solid #000; border-width: 1px 0; }
.layers .w { background: #fff; } .layers .g { background: #05a67c; } .layers .o { background: #fdc851; } .layers .s { background: #9cb4bd; } .layers .l { background: #d9d9d9; }
.layerbox .sb { border-width: 1px 3px; }
.selrow { height: 30px; padding: 5px 0; }
.selrow button { width: 60px; height: 20px; background: #fdc851; border: 1px solid #000; text-align: left; font: bold 12px/16px var(--mono); padding-left: 2px; }
.toolstrip { height: 33px; background: #ffffcc; display: flex; gap: 2px; border-bottom: 1px solid #000; }
.toolstrip button { width: 30px; height: 30px; border: 2px solid; border-color: #fff #b9b98c #b9b98c #fff; display: grid; place-items: center; outline: 1px solid #000; }
.toolstrip i { border: 3px solid #4d8c82; border-top: 0; }
.tealbit { width: 30px; }
.slot { width: 172px; margin-left: 48px; border-color: #b9b98c !important; outline: 1px solid #000; }
.er { font: bold 15px/30px var(--mono); margin-left: 129px; }
.cmdline { height: 15px; margin-top: 2px; border: 2px solid #3d6f70; border-bottom: 0; background: #b2ffff; }

.goldstrip { position: absolute; left: 1880px; right: 0; top: 475px; height: 14px; display: flex; gap: 2px; background: #000; border-bottom: 4px solid #557f80; padding-left: 55px; }
.goldstrip i { flex: none; width: 38px; background: #cfa347; border: 3px solid #f0cc7a; border-top: 0; outline: 1px solid #5c4310; }

.feat { left: 1652px; right: 0; top: 79px; height: 160px; background: var(--teal); border-left: 1px solid #555; }
.feat .titlebar { height: 31px; }
.featbtns { display: flex; gap: 1px; height: 47px; border-top: 1px solid #000; }
.featbtns button { width: 46px; height: 46px; background: var(--aqua); border: 3px solid; border-color: #6fb0ae var(--aqua-l) var(--aqua-l) #6fb0ae; outline: 1px solid #000; padding: 5px; display: block; }
.featbtns i { display: block; width: 28px; height: 28px; margin: auto; background: #000; }
.featbtns .cream { background: #ffffcc; border-color: #fffde0 #c4c494 #c4c494 #fffde0; }
.featbtns .cream i { border: solid #000; border-width: 11px 5px; background: #ffffcc; }
.featrow { height: 28px; margin: 1px 1px 2px; background: var(--aqua); border: 3px solid; border-color: var(--aqua-d) var(--aqua-l) var(--aqua-l) var(--aqua-d); outline: 1px solid #000; }

.meas { left: 1880px; right: 0; top: 224px; height: 252px; background: var(--teal); display: flex; flex-direction: column; }
.meas .titlebar { flex: none; padding-left: 20px; }
.meas h3 { height: 17px; padding-left: 23px; background: var(--aqua); border-top: 1px solid #000; font: bold 15px/16px var(--mono); }
.meas > button { height: 29px; border-top: 2px solid #000; border-right: 2px solid #000; background: var(--aqua); text-align: left; padding-left: 10px; box-shadow: inset 0 1px var(--aqua-l); }
.meas > button:last-of-type { border-bottom: 2px solid #000; height: 31px; }
.measfoot { margin-top: auto; height: 28px; border: 1px solid #000; border-left: 0; padding: 2px; display: flex; }
.measfoot .btn { flex: 1; text-align: left; padding-left: 49px; }

.hist { left: 1468px; top: 122px; width: 467px; height: 440px; background: var(--teal); border: 1px solid #333; box-shadow: 0 2px 8px #0006; }
.histtop { display: grid; grid-template-columns: 102px 353px; gap: 2px; height: 288px; margin: 4px 4px 0; }
.hleft { background: var(--aqua); border: 1px solid #000; display: flex; flex-direction: column; border-right-width: 2px; }
.radios { border-bottom: 2px solid #000; }
.radios label { display: flex; align-items: center; gap: 8px; height: 27px; padding-left: 6px; }
.radios input { appearance: none; width: 10px; height: 10px; transform: rotate(45deg); border: 2px solid; border-color: #d4fbfa #56908f #56908f #d4fbfa; }
.radios input:checked { background: #c8064c; border-color: #56908f #fff #fff #56908f; }
.hlistrow { display: flex; height: 115px; gap: 4px; }
.mlist { flex: 1; min-width: 0; overflow: hidden; border: 2px solid; border-color: var(--teal-d) var(--teal-l) var(--teal-l) var(--teal-d); padding: 3px; font-weight: bold; }
.mlist li { height: 18px; line-height: 16px; white-space: pre; display: flex; }
.mlist .sel { background: #000 content-box; padding-bottom: 3px; color: var(--teal); }
.d { margin-left: auto; padding-right: 7px; }
.hist .mlist { border-color: var(--aqua-d) var(--aqua-l) var(--aqua-l) var(--aqua-d); }
.hist .mlist .sel { color: var(--aqua); }
.hist .sb { background: #80bab9; border-color: var(--aqua-d) var(--aqua-l) var(--aqua-l) var(--aqua-d); }
.hist .sb .thumb { background: var(--aqua); border-color: var(--aqua-l) var(--aqua-d) var(--aqua-d) var(--aqua-l); }
.hist .sb i:not(.thumb) { background: #bdeeec; }
.icons { display: flex; gap: 4px; padding: 1px; }
.ic { display: grid; place-items: center; width: 30px; height: 30px; flex: none; overflow: hidden; }
.hright { background: var(--aqua); border: 1px solid #000; display: flex; flex-direction: column; }
.plot text { font: bold 15px var(--mono); }
.plot .ttl { font-style: italic; }
.hright .sb.h { margin: 1px; }
.hres { flex: 1; display: flex; border: 3px solid #000; border-width: 2px 3px 3px 1px; }
.hres .mlist { flex: none; width: 92px; padding: 2px; }
.hres .sb { margin: 0 1px 0 3px; }
.res { flex: 1; border-left: 1px solid #000; display: flex; flex-direction: column; padding: 0 2px; }
.res label { text-align: center; padding-top: 1px; }
.res output { padding: 3px 0 0 5px; display: block; line-height: 20px; }
.res input { appearance: none; width: 100%; height: 15px; background: #80bab9; border: 2px solid; border-color: var(--aqua-d) var(--aqua-l) var(--aqua-l) var(--aqua-d); }
.res input::-webkit-slider-thumb { appearance: none; width: 29px; height: 11px; background: linear-gradient(90deg, #9cdbda 13px, #56908f 13px 14px, #9cdbda 14px); border: 2px solid; border-color: var(--aqua-l) var(--aqua-d) var(--aqua-d) var(--aqua-l); }
.sash { height: 9px; padding-right: 11px; display: flex; justify-content: flex-end; background: linear-gradient(var(--teal) 3px, var(--teal-l) 3px 4px, var(--teal-d) 4px 5px, var(--teal) 5px); }
.sash i { width: 9px; background: var(--teal); border: 1px solid; border-color: var(--teal-l) var(--teal-d) var(--teal-d) var(--teal-l); }
.hbottom { margin: 0 4px; height: 120px; border: 2px solid #1d5548; padding: 17px 0 0 155px; box-shadow: 0 0 0 1px var(--teal-l); }

/* results viewer */
.rv { left: 37px; top: 516px; width: 495px; background: #000; border: 1px solid #333; box-shadow: 2px 3px 8px #0005; }
.rv h2 { margin: 1px 0 3px; height: 27px; padding: 0; background: var(--teal); border: 3px solid var(--aqua); box-shadow: inset -2px -2px var(--teal-d), inset 2px 2px var(--teal-l); text-align: center; font: bold 14px/20px var(--serif); }
.rvmain { display: grid; grid-template-columns: 170px 1fr; gap: 1px; height: 409px; }
.rvl, .rvr { display: flex; flex-direction: column; background: var(--teal); min-width: 0; min-height: 0; }
.rvl { border-right: 2px solid #000; }
.lh { display: flex; height: 28px; background: #000; gap: 2px; padding-bottom: 1px; }
.lh .btn { width: 50px; box-shadow: 0 0 0 1px var(--teal); margin: 1px 0 1px 1px; font-weight: normal; }
.lh .btn:last-child { width: 38px; }
.lh strong { flex: 1; background: var(--aqua); font-style: italic; text-align: center; line-height: 26px; }
.lw { flex: 1; display: flex; gap: 3px; min-height: 0; }
.rvl > .sb.h { margin: 4px 18px 2px 1px; }
.rvr > .sb.h { margin: 5px 19px 2px 0; }
.rvr .lw { gap: 5px; padding-right: 2px; }
.opt { position: relative; display: flex; background: var(--aqua); }
.opt select { flex: 1; width: 100%; padding: 0 6px; border: 2px solid; border-color: var(--aqua-l) var(--aqua-d) var(--aqua-d) var(--aqua-l); font-weight: bold; }
.opt::after { content: ""; position: absolute; right: 9px; top: 50%; margin-top: -4px; width: 13px; height: 7px; border: 2px solid; border-color: #d8fbfa #56908f #56908f #d8fbfa; pointer-events: none; }
.rep { height: 33px; padding: 2px 2px 2px 6px; border: 1px solid #000; border-right: 0; border-left-color: var(--aqua); }
.rep select { padding: 0 4px; }
.ch { display: flex; height: 30px; background: var(--aqua); align-items: stretch; border-bottom: 1px solid var(--teal-d); }
.ch .btn { width: 207px; box-shadow: 0 0 0 1px var(--teal); }
.ch label { line-height: 30px; flex: 1; padding-left: 1px; }
.ch .opt { width: 60px; margin-right: 2px; }
.ch .opt select { padding: 0 4px; }
.nav { display: flex; gap: 4px; height: 25px; padding: 0 2px; flex: none; }
.nav .btn { width: 44px; }
.nav .btn:first-child { width: 53px; }
.nav label { line-height: 26px; width: 58px; }
.nav input { flex: 1; min-width: 0; border: 2px solid; border-color: var(--teal-d) var(--teal-l) var(--teal-l) var(--teal-d); padding: 0 0 3px 3px; font-weight: bold; }
.zoomrow { display: flex; height: 33px; margin-top: 1px; flex: none; }
.zoomrow > span, .zoomrow > label { border: solid #000; border-width: 1px 0; }
.az { width: 125px; padding: 2px 2px 2px 6px; border-right-width: 1px !important; }
.az select { padding: 0 4px; }
.zoomrow > label:nth-child(2) { background: var(--aqua); width: 28px; line-height: 32px; }
.sv { width: 68px; background: #1ee61e; padding: 2px 2px 2px 6px; border-right-width: 1px !important; }
.zoomrow .sv select { border-color: #86f886 #109010 #109010 #86f886; }
.show { border: 0 !important; display: flex; gap: 4px; padding: 0 0 7px 5px; align-items: center; white-space: nowrap; }
.show input { appearance: none; width: 12px; height: 12px; background: linear-gradient(120deg, transparent 45%, #c8064c 45% 65%, transparent 65%), linear-gradient(50deg, transparent 20%, #c8064c 20% 40%, transparent 40%); border: 2px solid; border-color: var(--teal-d) var(--teal-l) var(--teal-l) var(--teal-d); }
.icons.end { justify-content: flex-end; flex: none; height: 34px; padding: 2px; }
.icons.end .ic:last-child { width: 34px; }
.stat, .erf { height: 20px; margin-top: 1px; line-height: 20px; background: var(--teal); white-space: pre; text-align: center; }
.stat { padding-right: 2px; }
.erf { background: #ffffcc; text-align: left; padding-left: 2px; }
.rvfoot { display: flex; gap: 4px; height: 34px; margin-top: 1px; padding: 2px; background: var(--aqua); }
.rvfoot .closeb { flex: 1; }
.rvfoot .hot { border-color: #e01818; border-width: 3px; }

/* excel */
.xl { left: 609px; top: 540px; width: 1514px; height: 570px; background: #d3e3f5; border-left: 1px solid #7a98bd; font: 12px/16px var(--ui); color: #15428b; }
.xltitle { height: 30px; background: #fff; display: flex; align-items: center; position: relative; }
.orb { position: absolute; left: 2px; top: 8px; z-index: 2; }
.qat { margin: 4px 0 0 40px; width: 103px; height: 22px; border: 1px solid #c4c8ce; border-left: 0; border-radius: 0 11px 11px 0; padding-left: 12px; display: flex; gap: 7px; align-items: center; }
.qat button + .caret { margin-left: -2px; }
.more { margin: 4px 0 0 8px; border-top: 2px solid #2b4a80; padding-top: 2px; display: flex; }
.xltitle h1 { position: absolute; inset: 0; text-align: center; font: 12px/32px var(--ui); color: #111; pointer-events: none; }
.xltitle .caps { margin-left: auto; }
.caret { display: inline-block; flex: none; width: 5px; height: 3px; background: #6a8cc0; clip-path: polygon(0 0, 100% 0, 50% 100%); }
.caret.dim { background: #b4bfce; } .caret.blk { background: #000; width: 7px; height: 4px; } .upc { transform: rotate(180deg); }
.tabs { height: 27px; background: #bfdbff; display: flex; padding: 2px 0 0 47px; gap: 5px; border-bottom: 1px solid #8db2e3; }
.tabs button { height: 25px; padding: 0 12px; line-height: 20px; }
.tabs .on { background: #e6f0fb; border: 1px solid #8db2e3; border-bottom: 0; border-radius: 3px 3px 0 0; padding: 0 11px; }
.tabs .q { margin: 4px 74px 0 auto; width: 13px; height: 13px; padding: 0; border-radius: 50%; background: #2b62c0; color: #fff; font: bold 11px/13px var(--ui); }
.ribbon { height: 107px; display: flex; gap: 4px; padding: 3px 3px 4px; background: #d0dff0; border-bottom: 1px solid #7fa4cf; }
.grp { flex: none; display: flex; flex-direction: column; border: 1px solid #a9c4e2; border-radius: 3px; background: linear-gradient(#dde8f5, #c9daee 50%, #d6e5f4); box-shadow: 1px 1px #f2f8ff; }
.grp footer { height: 19px; line-height: 19px; text-align: center; background: #c1d8f0; color: #4a72ae; position: relative; }
.dl { position: absolute; right: 5px; top: 4px; width: 7px; height: 7px; border: solid #6a8cc0; border-width: 1px 0 0 1px; }
.dl::after { content: ""; position: absolute; right: 0; bottom: 0; width: 4px; height: 4px; border: solid #6a8cc0; border-width: 0 1px 1px 0; }
.gb { flex: 1; display: flex; min-height: 0; padding: 0 2px; }
.gb.col { flex-direction: column; }
.clip { width: 112px; } .font { width: 233px; } .align { width: 228px; } .num { width: 135px; } .style { width: 461px; } .cel { width: 134px; } .edit { width: 190px; }
.r { display: flex; gap: 4px; height: 26px; align-items: center; margin-top: 9px; }
.r + .r { margin-top: 9px; }
.big { display: flex; flex-direction: column; align-items: center; width: 42px; padding-top: 3px; line-height: 17px; }
.big > svg { margin-bottom: 4px; height: 32px; }
.big > .caret { margin-top: 7px; }
.big span .caret { margin: 0 0 3px 4px; }
.stack { display: flex; flex-direction: column; padding: 0 0 0 6px; }
.stack button { display: flex; align-items: center; gap: 4px; height: 22px; }
.sig { width: 14px; color: #000; font: bold 15px/16px var(--serif); }
.r select { height: 26px; padding-left: 2px; border: 1px solid #abc1de; color: #000; background: linear-gradient(45deg, transparent 50%, #6a8cc0 50%) no-repeat right 7px top 11px / 3px 3px, linear-gradient(-45deg, transparent 50%, #6a8cc0 50%) no-repeat right 4px top 11px / 3px 3px, #eaf2fb; }
.wf { width: 131px; } .ws { width: 46px; margin-left: -4px; } .wn { width: 129px; }
.bx { display: flex; height: 22px; border: 1px solid #9ebae0; border-radius: 2px; background: linear-gradient(#dbe7f5, #c6d9ef); }
.bx button { display: flex; align-items: center; justify-content: center; gap: 4px; min-width: 22px; padding: 0 3px; color: #222; }
.bx button + button { border-left: 1px solid #c0d3ea; }
.bx .hi, .merged { background: linear-gradient(#fddc9a, #fbae4c 55%, #ffd978); }
.font .r + .r .bx:first-child button:last-child { min-width: 34px; gap: 8px; }
.se { font: bold 14px/16px var(--serif); color: #111; }
i.se { font-style: italic; }
.f18 { font-size: 17px; }
.se sup { font-size: 9px; color: #2f5fa8; line-height: 0; }
.ac .se { border-bottom: 4px solid #f00; line-height: 12px; padding: 0 3px; color: #2c4a88; }
.wen small { display: block; font: bold 9px/7px var(--serif); color: #222; }
.wen span { line-height: 11px; color: #3c55b8; text-align: center; }
.cols { display: flex; flex-direction: column; }
.wrapc { margin-left: 4px; border-left: 1px solid #f2f8ff; padding: 12px 0 0 3px; gap: 12px; }
.flat { display: flex; align-items: center; gap: 4px; height: 22px; padding: 0 3px; border: 1px solid transparent; }
.merged { border-color: #b8955a; gap: 3px; padding: 0 2px; }
.bx.tiny button { font: bold 9px/9px "Liberation Sans", sans-serif; padding: 0; min-width: 21px; letter-spacing: 0; }
.num .bx:first-child button { min-width: 23px; }
.cf { width: 54px; } .tf { width: 60px; } .cf svg, .tf svg { flex: none; }
.gal { margin: 4px 0 0 3px; width: 336px; height: 60px; border: 1px solid #b4cbe8; display: flex; background: #dce8f6; }
.cellsx { display: grid; grid-template-columns: repeat(3, 100px); gap: 6px; padding: 4px 3px; grid-auto-rows: 22px; flex: 1; }
.cellsx button { background: #fff; text-align: left; padding-left: 5px; color: #000; font: 14px/20px var(--song); }
.cellsx .yh { font-size: 13px; }
.cellsx .cur { outline: 2px solid #e8a83c; font-size: 15px; }
.cellsx .bad { background: #ffc7ce; color: #9c0006; }
.gs { width: 14px; display: grid; border-left: 1px solid #b4cbe8; }
.gs button { display: grid; place-items: center; border-bottom: 1px solid #b4cbe8; }
.cel .gb { padding-left: 1px; }
.fbar { display: flex; align-items: center; height: 21px; margin: 1px 0 3px; background: #fff; border-bottom: 1px solid #5f86b5; color: #000; font: 15px/18px var(--song); }
.nb { width: 138px; text-align: center; padding-left: 0; }
.fx { width: 76px; margin: 0 11px 0 12px; height: 19px; background: linear-gradient(#dbe8f8, #b7cfee); border-radius: 9px 0 0 9px; border-right: 1px solid #5f86b5; display: flex; justify-content: space-between; align-items: center; padding: 0 6px 0 5px; color: #555; font-weight: bold; }
.blk { margin: 0 -5px 0 8px; }
.fx i { width: 9px; height: 9px; border-radius: 50%; background: #a9b8cd; }
.fi { flex: 1; }
.sheet { position: relative; background: #fff; }
.grid { table-layout: fixed; width: 1458px; border-collapse: separate; border-spacing: 0; color: #000; border-top: 1px solid #5f86b5; }
.grid .rh { width: 34px; } .grid .c { width: 72px; } .grid .m { width: 128px; }
.grid th { padding: 0; font: 16px/18px var(--song); color: #27303c; background: #e4ecf7; border: solid #9eb6ce; border-width: 0 1px 1px 0; vertical-align: bottom; }
.grid thead th { height: 19px; background: linear-gradient(#f6f9fd, #d5dfec); }
.grid .s, .grid thead .s { background: linear-gradient(#f9d99f, #f1b85a); border-color: #e8964a; }
.grid tbody .s { background: #ffd58d; }
.grid .corner { background: #a9c4e9 !important; }
.grid td { padding: 0 0 0 3px; height: 31px; border: solid #ccd3dd; border-width: 0 1px 1px 0; white-space: nowrap; vertical-align: middle; }
.grid .h36 td, .grid .h36 th { height: 36px; }
.grid .t1 { background: #92d050; font: bold 20px/30px var(--song); }
.grid .t2 { color: #e00000; font: bold 17px/30px var(--song); text-align: center; }
.grid .t3 { color: #2020d8; font: 21px/30px var(--song); outline: 3px solid #000; outline-offset: -2px; }
.grid .t4 { font: 19px/30px var(--song); }
.t4 span { color: #2020d8; }
.grid .t5 { font: 16px/28px var(--song); padding-left: 2px; }

.capab, .req { position: absolute; table-layout: fixed; border-collapse: collapse; background: #fff; color: #111; }
.capab { left: 802px; top: 179px; width: 780px; }
.k1 { width: 108px; } .k2 { width: 98px; } .k3 { width: 181px; } .k4 { width: 196px; } .k5 { width: 197px; }
.capab th, .capab td { border: 1px solid #222; padding: 0; text-align: center; overflow: hidden; white-space: nowrap; }
.capab .y { background: #ffc000; height: 27px; font: bold 14px/18px var(--song); }
.capab .ttl { height: 20px; font-size: 16px; }
.capab .ttl th { border-top: 0; }
.capab .y th:nth-child(5) { text-align: left; padding-left: 4px; }
.rd { color: #f02020; }
.capab .rd { height: 26px; font: 12px/16px var(--song); }
.capab .rd td { border-color: #222; }
.capab .rd td:nth-child(5) { text-align: left; padding-left: 25px; }
.capab .nt { font: 12px/14px var(--song); }
.capab .nt td { text-align: left; padding: 1px 0; border-bottom: 2px solid #000; }
.frame { position: absolute; left: 18px; top: 148px; width: 784px; height: 212px; border: 4px solid #f8f820; box-shadow: 2px 2px 4px #0009, inset 3px 3px 5px #0008; }
.req { left: 15px; top: 6px; width: 751px; font: 13px/16px var(--song); }
.req .a { width: 66px; } .req .b { width: 77px; } .req .d { width: 83px; }
.req td, .req th { border: 1px solid #222; padding: 0 4px; text-align: center; white-space: normal; }
.req td:nth-child(3) { padding: 0 2px; }
.ot { background: #f79646; height: 25px; font: bold 20px/24px var(--song); }
.r1 { height: 16px; line-height: 15px; } .r2 { height: 66px; } .r3 { height: 33px; } .r4 { height: 49px; }
.req b { font-size: 15px; }
.req .hl { background: #ff0; color: #f00; }
.req .rd { color: #f02020; }
.mark { position: absolute; left: 1150px; top: 354px; }
```
